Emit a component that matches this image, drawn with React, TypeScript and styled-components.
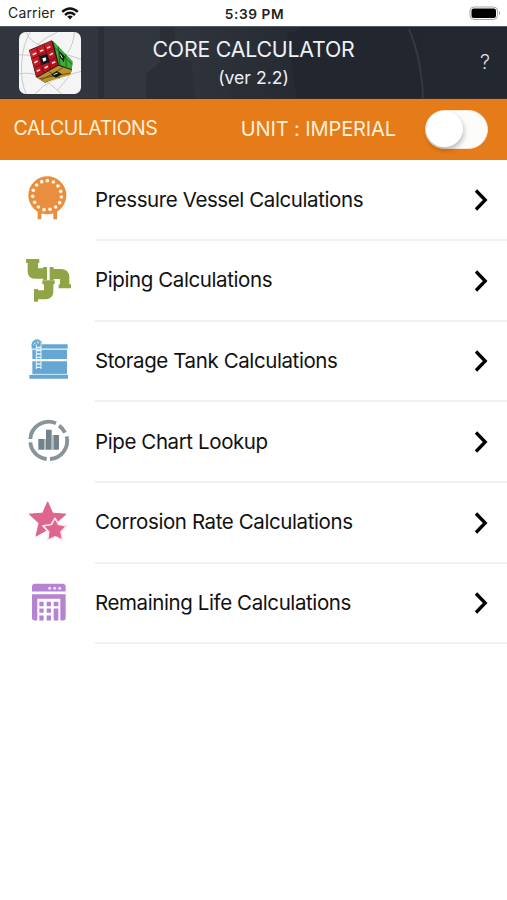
import React from 'react';
import styled, { createGlobalStyle } from 'styled-components';

const GlobalStyle = createGlobalStyle`
  * { box-sizing: border-box; }
  body { margin: 0; background: #fff; font-family: Inter, "Liberation Sans", sans-serif; }
`;

const Screen = styled.div`
  width: 507px;
  height: 900px;
  background: #fff;
  overflow: hidden;
`;

const Label = styled.span<{ $size: number; $spacing?: number; $weight?: number }>`
  font-size: ${p => p.$size}px;
  letter-spacing: ${p => p.$spacing ?? 0}px;
  font-weight: ${p => p.$weight ?? 400};
  line-height: 1.2;
  white-space: nowrap;
`;

const StatusBar = styled.div`
  height: 25.5px;
  display: grid;
  grid-template-columns: 1fr auto 1fr;
  align-items: center;
  padding: 2px 6px 0 8px;
  color: #222;
`;

const Carrier = styled.div`
  display: flex;
  align-items: center;
  gap: 6px;
`;

const Battery = styled.svg`
  justify-self: end;
`;

const Header = styled.header`
  position: relative;
  height: 73px;
  display: grid;
  grid-template-columns: 81px 1fr 81px;
  align-items: center;
  color: #eef1f5;
  background: #23272f;
`;

const Backdrop = styled.svg`
  position: absolute;
  inset: 0;
`;

const Logo = styled.svg`
  position: relative;
  margin: 2px 0 0 19px;
`;

const Titles = styled.div`
  position: relative;
  display: flex;
  flex-direction: column;
  align-items: center;
  gap: 5px;
  padding: 1px 0 0;
`;

const Help = styled.div`
  position: relative;
  justify-self: end;
  padding: 0 17px 1px 0;
  color: #d9dde2;
`;

const UnitBar = styled.div`
  height: 61px;
  display: flex;
  align-items: center;
  padding: 0 19px 0 13.5px;
  background: #e67b19;
  color: #fff0d8;
`;

const UnitLabel = styled(Label)`
  margin-left: auto;
  margin-right: 29px;
`;

const Toggle = styled.div`
  width: 63px;
  height: 39px;
  border-radius: 20px;
  background: #fcfcfb;
  border: 1px solid #f4e6d6;
  display: flex;
  align-items: center;
`;

const Knob = styled.div`
  width: 37px;
  height: 36px;
  border-radius: 50%;
  background: #fff;
  box-shadow: 1px 3px 5px rgba(0, 0, 0, 0.25);
`;

const List = styled.div`
  padding-top: 0.7px;
`;

const Row = styled.div`
  height: 80.7px;
  display: grid;
  grid-template-columns: 95px 1fr;
`;

const RowIcon = styled.svg`
  width: 70px;
  height: 65px;
  align-self: center;
  margin-left: 15px;
`;

const RowBody = styled.div`
  display: flex;
  align-items: center;
  justify-content: space-between;
  padding: 1px 19.5px 0 0;
  border-bottom: 2px solid #f0f0f0;
  color: #111;
`;

const dots = [[97,45],[115,49],[129,61],[137,77],[139,94],[134,111],[122,124],[105,131],[87,132],[70,124],[59,110],[53,92],[55,74],[65,58],[80,48]];

const Vessel = () => (
  <RowIcon viewBox="0 7 210 195">
    <g fill="#e98e3e">
      <circle cx="97" cy="89" r="57" />
      <path d="M68 130h11v31H68zM115 130h11v31h-11z" />
    </g>
    {dots.map(([x, y]) => <circle key={`${x}-${y}`} cx={x} cy={y} r="5.5" fill="#fff3e0" />)}
  </RowIcon>
);

const Pipes = () => (
  <RowIcon viewBox="0 3 210 195">
    <g fill="#90a546" stroke="#90a546" strokeWidth="4" strokeLinejoin="round">
      <path d="M35 35h36v8h-4v17q0 3 4 3h15v-4h8v35h-8v-4H59Q41 89 40 71V43h-5z" />
      <path d="M106 59h8v6h26q20 1 21 22v24h5v8h-33v-8h4V91h-23v4h-8z" />
      <path d="M84 99h33v8h-4v24q-1 20-22 21H67v7h-8v-34h8v4h18q4 0 4-4v-18h-5z" />
    </g>
  </RowIcon>
);

const Tank = () => (
  <RowIcon viewBox="0 2 210 195">
    <g fill="#65a7d2">
      <path d="M50 48h108v13H50zM52 64h104v28H52zM52 99h104v38H52zM43 140h116v11H43z" />
      <path d="M49 52a17 19 0 0 1 34 0z" />
    </g>
    <path d="M50 62h108M52 138h104" stroke="#b9dbef" strokeWidth="3" />
    <path d="M64 122V48M78 122V48" stroke="#e7f4fb" strokeWidth="3" fill="none" />
    <path d="M64 57h14M64 67h14M64 77h14M64 87h14M64 97h14M64 107h14M64 117h14" stroke="#e7f4fb" strokeWidth="4" />
    <path d="M55 49l7-7M69 38v8M82 48l-6-5" stroke="#e7f4fb" strokeWidth="3" />
  </RowIcon>
);

const Chart = () => (
  <RowIcon viewBox="0 4 210 195">
    <g fill="none" stroke="#87949a" strokeWidth="11.5">
      <path d="M46 91A55 55 0 0 1 123 44" />
      <path d="M132 51A55 55 0 0 1 150 72" />
      <path d="M155 83A55 55 0 0 1 105 151" />
      <path d="M95 151A55 55 0 0 1 46 101" />
    </g>
    <path d="M70 91h17v32H70zM93 63h17v60H93zM115 79h17v44h-17z" fill="#73838b" />
    <path d="M87 91h6v32h-6zM110 79h5v44h-5z" fill="#b5bec3" />
  </RowIcon>
);

const Stars = () => (
  <RowIcon viewBox="0 .5 210 195">
    <g strokeLinejoin="round">
      <path d="M98 33l15 34 40 3-31 27 9 39-33-20-35 20 9-39-29-27 40-3z" fill="#dc668d" stroke="#dc668d" strokeWidth="3" />
      <path d="M120 82l11 19 24 4-17 18 5 25-22-10-23 10 3-25-17-18 25-4z" fill="#dc668d" stroke="#ffe3ed" strokeWidth="5" />
    </g>
  </RowIcon>
);

const Calculator = () => (
  <RowIcon viewBox="0 2.5 210 195">
    <g fill="#b583d0">
      <path d="M51 64V50q0-9 9-9h83q9 0 9 9v14zM51 72h101v71q0 8-8 8h-8V86H67v65h-8q-8 0-8-8z" />
      <path d="M73 95h13v13H73zM95 95h13v13H95zM116 95h14v13h-14zM73 115h13v13H73zM95 115h13v13H95zM116 115h14v36h-14zM73 136h13v15H73zM95 136h13v15H95z" />
    </g>
    <g fill="#f0dff8"><circle cx="104" cy="54" r="4.5" /><circle cx="119" cy="54" r="4.5" /><circle cx="134" cy="54" r="4.5" /></g>
  </RowIcon>
);

const Chevron = () => (
  <svg width="14" height="22" viewBox="0 0 14 22">
    <path d="M2 1.5l9.2 9.5L2 20.5" fill="none" stroke="#000" strokeWidth="3.3" />
  </svg>
);

const items = [
  { text: 'Pressure Vessel Calculations', Icon: Vessel },
  { text: 'Piping Calculations', Icon: Pipes },
  { text: 'Storage Tank Calculations', Icon: Tank },
  { text: 'Pipe Chart Lookup', Icon: Chart },
  { text: 'Corrosion Rate Calculations', Icon: Stars },
  { text: 'Remaining Life Calculations', Icon: Calculator },
];

const CubeLogo = () => (
  <Logo width="62" height="62" viewBox="0 0 186 186">
    <defs>
      <clipPath id="tile"><rect width="186" height="186" rx="20" /></clipPath>
      <linearGradient id="red" x2="1" y2="1"><stop stopColor="#d8262e" /><stop offset="1" stopColor="#a50b17" /></linearGradient>
    </defs>
    <rect width="186" height="186" rx="20" fill="#f5f5f6" />
    <g clipPath="url(#tile)" fill="none" stroke="#c9cacc" strokeWidth="3">
      <path d="M22 0Q28 28 74 44T186 82M0 68L32 70M34 0Q12 36 8 92T22 186M116 0Q82 14 52 40M166 0Q164 36 146 62M0 126Q40 118 66 136T128 186M48 186Q72 158 100 146T186 118M154 126Q138 150 116 174" />
    </g>
    <path d="M30 54L98 25l62 67-2 26-80 34-27-17z" fill="#251719" />
    <path d="M31 56L97 26l20 73-64 36z" fill="url(#red)" />
    <path d="M102 26l59 62-3 24-38-14z" fill="#40ad35" />
    <path d="M54 137l64-36 41 14-5 13-77 23z" fill="#b9942c" />
    <path d="M53 48l20 73M75 38l20 73M38 80l68-31M45 107l68-31" stroke="#790b14" strokeWidth="3" />
    <path d="M118 44l5 55M140 67l2 41M106 45l54 53" stroke="#176b20" strokeWidth="3" />
    <path d="M67 144l65-37M62 140l92-17M88 118l35 20" stroke="#68551d" strokeWidth="3" />
    <path d="M61 73l24-8 7 26-23 8z" fill="#141820" />
    <path d="M121 58l16 15-2 18-13-16zM96 129l18-12 15 10-18 10z" fill="#111912" />
    <path d="M70 79l10-3 2 9-9 4z" fill="#fff" />
    <path d="M41 68l11-5M63 58l10-4M84 48l10-4M46 92l10-5M92 69l10-5M53 118l10-5M77 108l10-5M99 94l10-5" stroke="#ffd9dc" strokeWidth="5" />
    <path d="M104 128l12-5M124 67l6 11" stroke="#e8edda" strokeWidth="3" />
  </Logo>
);

export default function App() {
  return (
    <>
      <GlobalStyle />
      <Screen>
        <StatusBar>
          <Carrier>
            <Label $size={14} $spacing={0.15}>Carrier</Label>
            <svg width="18" height="13" viewBox="0 0 18 13">
              <path d="M1.2 4.8Q9-2 16.8 4.8M4 8Q9 3.7 14 8" fill="none" stroke="#111" strokeWidth="2.4" />
              <path d="M6.2 9.5Q9 7.4 11.8 9.5L9 12.5z" fill="#111" />
            </svg>
          </Carrier>
          <Label $size={13.7} $spacing={0.6} $weight={600}>5:39 PM</Label>
          <Battery width="32" height="15" viewBox="0 0 32 15">
            <rect x="1" y="1" width="27.5" height="12.5" rx="4" fill="#fff" stroke="#a4a4a4" />
            <rect x="2.5" y="2.5" width="24.5" height="9.5" rx="2.2" fill="#000" />
            <path d="M30 5q2 2.2 0 4.4z" fill="#999" />
          </Battery>
        </StatusBar>
        <Header>
          <Backdrop width="507" height="73" viewBox="0 0 507 73">
            <defs><linearGradient id="haze"><stop stopColor="#30353e" /><stop offset=".5" stopColor="#31363f" /><stop offset="1" stopColor="#262b33" /></linearGradient></defs>
            <rect width="300" height="73" fill="url(#haze)" />
            <path d="M98 0h6v73h-6zM160 0h15v25l17 22v26h-46V48l14-12zM182 35h9l4 38h-18zM233 45l7-7 5 9-2 26h-12z" fill="#292e37" />
            <path d="M287 8l24-8h111l1 73H297z" fill="#22262e" />
            <path d="M409 3Q422 34 423 73" fill="none" stroke="#343840" strokeWidth="2" />
            <path d="M0 .5h507" stroke="#515c62" />
            <path d="M0 72.5h507" stroke="#392a23" />
          </Backdrop>
          <CubeLogo />
          <Titles>
            <Label $size={21.3} $spacing={-0.2}>CORE CALCULATOR</Label>
            <Label $size={17.6}>(ver 2.2)</Label>
          </Titles>
          <Help><Label $size={20} $weight={300}>?</Label></Help>
        </Header>
        <UnitBar>
          <Label $size={19.5} $spacing={-0.45}>CALCULATIONS</Label>
          <UnitLabel $size={20} $spacing={-0.1}>UNIT : IMPERIAL</UnitLabel>
          <Toggle><Knob /></Toggle>
        </UnitBar>
        <List>
          {items.map(({ text, Icon }) => (
            <Row key={text}>
              <Icon />
              <RowBody>
                <Label $size={20.5} $spacing={-0.4}>{text}</Label>
                <Chevron />
              </RowBody>
            </Row>
          ))}
        </List>
      </Screen>
    </>
  );
}
